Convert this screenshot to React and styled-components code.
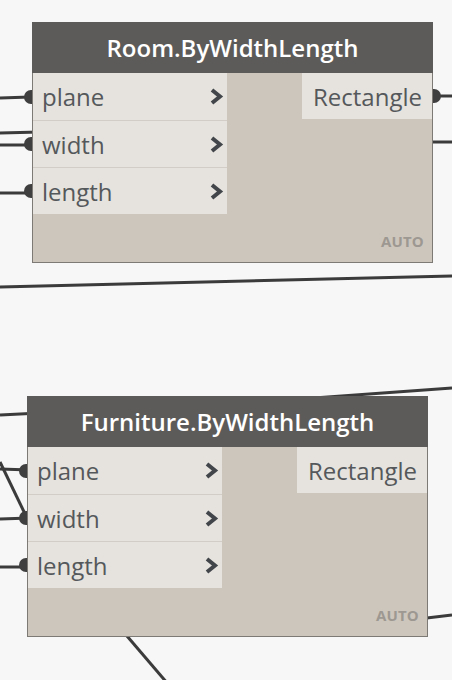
import React from "react";
import styled, { createGlobalStyle } from "styled-components";

const Global = createGlobalStyle`
  html, body { margin: 0; padding: 0; background: #f7f7f7; }
  #root { width: 452px; height: 680px; }
`;

const Canvas = styled.div`
  position: relative;
  width: 452px;
  height: 680px;
  overflow: hidden;
  background: #f7f7f7;
  font-family: "Open Sans", "Noto Sans", sans-serif;
`;

const Wires = styled.svg`
  position: absolute;
  left: 0;
  top: 0;
`;

const Node = styled.div`
  position: absolute;
  left: ${(p) => p.$x}px;
  top: ${(p) => p.$y}px;
  width: 401px;
  height: 241px;
  box-sizing: border-box;
  border: 1px solid #7d7974;
  background: #cdc6bd;
  display: flex;
  flex-direction: column;
`;

const Header = styled.div`
  height: 51px;
  margin: -1px -1px 0;
  background: #5d5b59;
  color: #ffffff;
  font-weight: 600;
  font-size: 24px;
  display: flex;
  align-items: center;
  justify-content: center;
  letter-spacing: 0;
  padding-bottom: 1px;
  box-sizing: border-box;
`;

const Body = styled.div`
  flex: 1;
  display: flex;
  justify-content: space-between;
  align-items: flex-start;
  position: relative;
`;

const Inputs = styled.div`
  width: 194px;
  display: flex;
  flex-direction: column;
  background: #e6e3de;
`;

const Port = styled.div`
  position: relative;
  height: 47px;
  box-sizing: border-box;
  display: flex;
  align-items: center;
  justify-content: space-between;
  padding: 0 3px 0 9px;
  color: #55585b;
  font-size: 24px;
  border-top: ${(p) => (p.$first ? "none" : "1px solid #d2cec7")};
`;

const Output = styled.div`
  position: relative;
  width: 130px;
  height: 46px;
  box-sizing: border-box;
  background: #e6e3de;
  color: #55585b;
  font-size: 24px;
  display: flex;
  align-items: center;
  justify-content: flex-end;
  padding-right: 10px;
`;

const Connector = styled.span`
  position: absolute;
  top: 50%;
  width: 8px;
  height: 14px;
  margin-top: -7px;
  background: #3f3f3f;
  ${(p) =>
    p.$side === "left"
      ? "left: -9px; border-radius: 8px 0 0 8px;"
      : "right: -9px; border-radius: 0 8px 8px 0;"}
`;

const Lacing = styled.div`
  position: absolute;
  right: 8px;
  bottom: 13px;
  font-size: 15px;
  line-height: 15px;
  font-weight: 700;
  color: #9d9891;
  letter-spacing: 0.2px;
`;

const Chevron = () => (
  <svg width="15" height="17" viewBox="0 0 15 17">
    <polyline
      points="3,2 11,8.5 3,15"
      fill="none"
      stroke="#42464a"
      strokeWidth="4"
      strokeLinejoin="miter"
    />
  </svg>
);

const DynamoNode = ({ x, y, title, inputs, outputConnected }) => (
  <Node $x={x} $y={y}>
    <Header>{title}</Header>
    <Body>
      <Inputs>
        {inputs.map((name, i) => (
          <Port key={name} $first={i === 0}>
            <Connector $side="left" />
            <span>{name}</span>
            <Chevron />
          </Port>
        ))}
      </Inputs>
      <Output>
        {outputConnected && <Connector $side="right" />}
        Rectangle
      </Output>
      <Lacing>AUTO</Lacing>
    </Body>
  </Node>
);

const wires = [
  [0, 98, 30, 97],
  [0, 133, 40, 132],
  [0, 145, 30, 145],
  [0, 193, 30, 193],
  [436, 96, 452, 96],
  [420, 142, 452, 142],
  [0, 287, 452, 276],
  [0, 415, 40, 413],
  [0, 469, 30, 470],
  [0, 462, 27, 518],
  [0, 519, 30, 518],
  [0, 567, 30, 567],
  [300, 399, 452, 388],
  [410, 620, 452, 615],
  [115, 622, 168, 684],
];

export default function App() {
  return (
    <>
      <Global />
      <Canvas>
        <Wires width="452" height="680" viewBox="0 0 452 680">
          {wires.map(([x1, y1, x2, y2], i) => (
            <line
              key={i}
              x1={x1}
              y1={y1}
              x2={x2}
              y2={y2}
              stroke="#3b3b3b"
              strokeWidth="3"
            />
          ))}
        </Wires>
        <DynamoNode
          x={32}
          y={22}
          title="Room.ByWidthLength"
          inputs={["plane", "width", "length"]}
          outputConnected
        />
        <DynamoNode
          x={27}
          y={396}
          title="Furniture.ByWidthLength"
          inputs={["plane", "width", "length"]}
        />
      </Canvas>
    </>
  );
}
